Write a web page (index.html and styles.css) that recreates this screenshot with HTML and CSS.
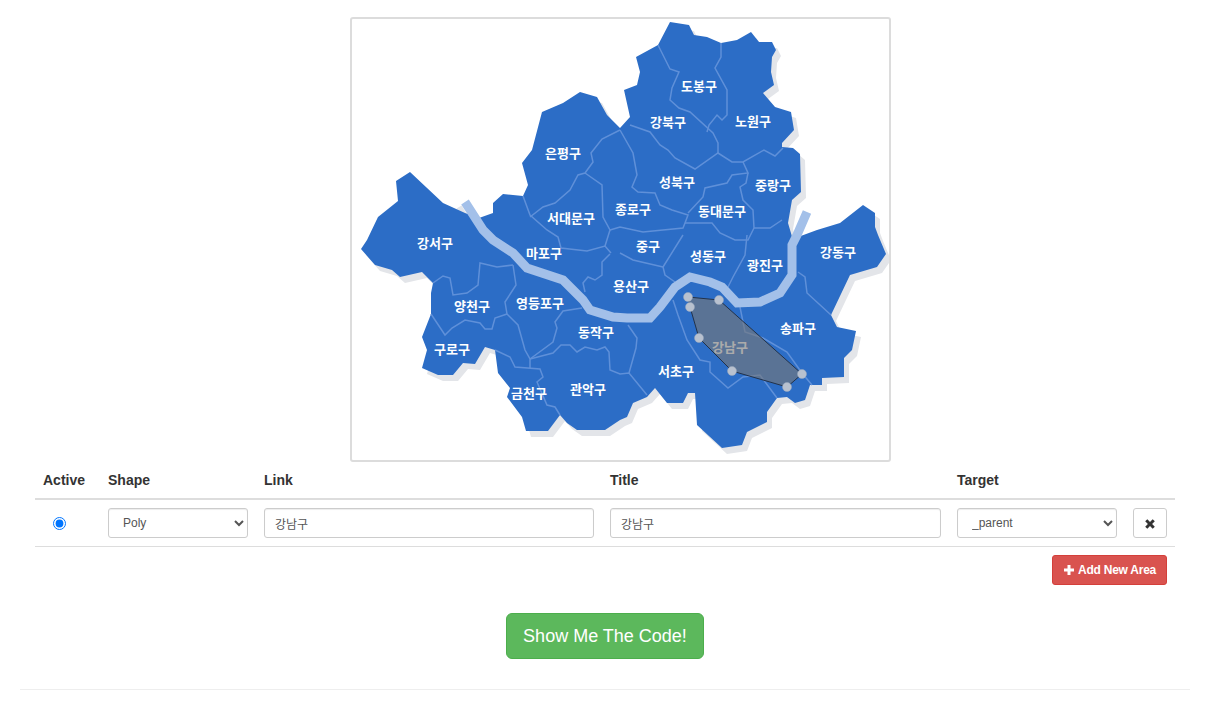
FILE: index.html
```html
<!DOCTYPE html>
<html lang="ko">
<head>
    <meta charset="UTF-8">
    <meta name="viewport" content="width=device-width, initial-scale=1.0">
    <title>Image Map Generator</title>
    <link rel="stylesheet" href="styles.css">
</head>
<body>

<div class="container">
    <!-- Map preview -->
    <div class="map-frame">
        <svg class="map" viewBox="352 19 537 441" width="537" height="441">
            <defs>
                <polygon id="seoul" points="670,22 689,25 694,35 707,37 721,43 737,40 751,32 759,42 772,42 776,50 772,57 771,72 774,85 763,93 775,107 791,112 794,130 782,143 782,147 793,148 800,154 801,192 792,200 788,223 793,240 798,237 817,230 840,223 863,205 875,213 875,227 878,235 886,254 877,267 850,275 831,315 837,327 856,331 852,350 844,358 844,377 822,378 822,385 810,385 805,400 795,403 787,397 777,398 767,412 767,422 747,432 742,445 722,448 697,425 695,393 688,393 683,403 667,403 655,388 647,397 633,403 627,417 620,420 605,430 577,430 567,423 560,415 548,431 526,431 522,417 507,397 510,388 498,373 495,350 485,347 475,364 463,363 453,375 438,375 422,368 427,350 422,337 431,314 431,293 433,283 422,272 400,277 392,270 375,265 361,249 367,240 378,217 398,201 396,181 410,172 443,203 465,213 479,218 493,213 493,203 503,194 523,196 528,185 522,163 532,150 542,112 563,103 580,92 597,97 607,115 620,128 630,117 624,90 637,85 640,72 636,57 658,45"/>
            </defs>

            <use href="#seoul" class="shadow" transform="translate(5 6)"/>
            <path class="river-shadow" d="M459 207 L472 228"/>
            <use href="#seoul" class="land"/>

            <!-- district borders -->
            <g class="borders">
                <polyline points="620,130 602,139 591,153 593,162 585,173 578,175 570,190 555,203 543,207 530,217"/>
                <polyline points="523,196 530,215 547,230 558,237 561,248 587,251 605,246 611,253"/>
                <polyline points="585,173 602,185 603,217 610,230 605,246"/>
                <polyline points="620,130 633,153 637,175 632,187 638,192 655,193 660,205 672,210 688,215 685,223 683,228 663,230 643,232 620,227 610,230"/>
                <polyline points="630,125 650,132 660,145 668,150 675,158 695,169 718,153 732,162 743,162 764,150 775,156 783,148"/>
                <polyline points="658,45 670,69 679,72 672,88 670,100 679,108 690,112 713,133 718,143 718,153"/>
                <polyline points="721,43 721,57 715,68 727,90 727,115 722,120 717,115 709,125 707,132"/>
                <polyline points="743,162 748,173 732,175 727,183 705,188 703,197 688,213"/>
                <polyline points="748,173 746,183 740,187 743,200 753,210 754,228 770,228 782,220"/>
                <polyline points="685,223 712,223 720,233 735,240 748,240 754,228"/>
                <polyline points="747,235 745,255 733,277 728,287"/>
                <polyline points="683,235 663,267 665,275 675,282"/>
                <polyline points="620,253 633,260 663,267"/>
                <polyline points="610,254 602,262 602,275 595,280 588,277 583,283 585,292"/>
                <polyline points="513,265 497,267 480,263 478,285 467,293 453,295 450,278 443,276 433,283"/>
                <polyline points="513,265 516,285 505,302 507,314"/>
                <polyline points="431,314 445,335 452,328 465,320 480,323 485,329 492,329 495,318 507,314"/>
                <polyline points="507,314 518,325 525,350 530,359 530,368"/>
                <polyline points="495,350 510,357 515,367 540,369 543,377 537,382 547,405 555,407 560,415"/>
                <polyline points="530,359 553,342 557,328 555,322 563,311 582,308"/>
                <polyline points="530,359 553,353 561,345 570,345 577,352 585,347 597,350 605,347 609,352 610,370 620,374 629,373 647,395"/>
                <polyline points="629,373 636,348 637,338 628,325"/>
                <polyline points="673,300 678,315 687,340 700,360 710,362 710,372 728,388 743,377 760,375 777,398"/>
                <polyline points="740,307 745,332 763,338 787,352 802,373 812,385"/>
                <polyline points="798,272 805,277 807,293 831,315"/>
            </g>

            <polyline class="river" points="465,202 483,230 493,240 513,253 527,268 563,280 573,290 583,300 590,310 613,317 627,318 650,318 660,307 675,287 690,277 710,282 722,287 737,303 760,302 780,293 792,275 792,245 797,235 807,212"/>

            <g class="labels">
                <text x="699" y="91">도봉구</text>
                <text x="668" y="127">강북구</text>
                <text x="753" y="126">노원구</text>
                <text x="563" y="158">은평구</text>
                <text x="677" y="187">성북구</text>
                <text x="773" y="190">중랑구</text>
                <text x="633" y="214">종로구</text>
                <text x="722" y="216">동대문구</text>
                <text x="571" y="223">서대문구</text>
                <text x="435" y="248">강서구</text>
                <text x="648" y="251">중구</text>
                <text x="708" y="261">성동구</text>
                <text x="544" y="258">마포구</text>
                <text x="765" y="270">광진구</text>
                <text x="838" y="257">강동구</text>
                <text x="631" y="291">용산구</text>
                <text x="472" y="311">양천구</text>
                <text x="540" y="308">영등포구</text>
                <text x="596" y="337">동작구</text>
                <text x="798" y="333">송파구</text>
                <text x="730" y="352">강남구</text>
                <text x="452" y="354">구로구</text>
                <text x="676" y="376">서초구</text>
                <text x="588" y="394">관악구</text>
                <text x="529" y="398">금천구</text>
            </g>

            <!-- selected area -->
            <polygon class="area" points="688,297 719,300 802,374 787,387 732,371 699,338 690,307"/>
            <g class="handles">
                <circle cx="688" cy="297" r="4.5"/>
                <circle cx="719" cy="300" r="4.5"/>
                <circle cx="802" cy="374" r="4.5"/>
                <circle cx="787" cy="387" r="4.5"/>
                <circle cx="732" cy="371" r="4.5"/>
                <circle cx="699" cy="338" r="4.5"/>
                <circle cx="690" cy="307" r="4.5"/>
            </g>
        </svg>
    </div>

    <table class="areas">
        <colgroup>
            <col class="col-active">
            <col class="col-shape">
            <col class="col-link">
            <col class="col-title">
            <col class="col-target">
            <col>
        </colgroup>
        <thead>
            <tr>
                <th>Active</th>
                <th>Shape</th>
                <th>Link</th>
                <th>Title</th>
                <th>Target</th>
                <th></th>
            </tr>
        </thead>
        <tbody>
            <tr>
                <td><input class="radio" type="radio" name="active" checked></td>
                <td>
                    <select class="field">
                        <option>Poly</option>
                        <option>Rect</option>
                        <option>Circle</option>
                    </select>
                </td>
                <td><input class="field" type="text" value="강남구"></td>
                <td><input class="field" type="text" value="강남구"></td>
                <td>
                    <select class="field">
                        <option>_parent</option>
                        <option>_blank</option>
                        <option>_self</option>
                        <option>_top</option>
                    </select>
                </td>
                <td>
                    <button class="btn btn-remove" type="button" aria-label="Remove">
                        <svg class="icon" viewBox="0 0 12 12" width="12" height="12"><path d="M3.3 1.2 6 3.9l2.7-2.7 2.1 2.1L8.1 6l2.7 2.7-2.1 2.1L6 8.1l-2.7 2.7-2.1-2.1L3.9 6 1.2 3.3z"/></svg>
                    </button>
                </td>
            </tr>
        </tbody>
    </table>

    <div class="add-row">
        <button class="btn btn-add" type="button">
            <svg class="icon" viewBox="0 0 12 12" width="12" height="12"><path d="M4.5 1h3v3.5H11v3H7.5V11h-3V7.5H1v-3h3.5z"/></svg>
            Add New Area
        </button>
    </div>

    <div class="show-row">
        <button class="btn btn-show" type="button">Show Me The Code!</button>
    </div>
</div>

<hr class="rule">

</body>
</html>
```

FILE: styles.css
```css
/* Styles for the page */
html, body {
    overflow: hidden;
}
body {
    font-family: "Liberation Sans", "Noto Sans CJK KR", Arial, sans-serif;
    font-size: 14px;
    line-height: 20px;
    margin: 0;
    padding: 0;
    background: #ffffff;
    color: #333;
}
.container {
    width: 1140px;
    margin-left: 35px;
    padding-top: 17px;
}

/* map */
.map-frame {
    width: 537px;
    height: 441px;
    margin-left: 315px;
    border: 2px solid #dcdcdc;
    border-radius: 3px;
}
.map {
    display: block;
}
.shadow {
    fill: #e3e5e9;
}
.land {
    fill: #2c6dc6;
}
.borders polyline {
    fill: none;
    stroke: #5f90d9;
    stroke-width: 1.5;
}
.river {
    fill: none;
    stroke: #a3c0e9;
    stroke-width: 9;
}
.river-shadow {
    fill: none;
    stroke: #e3e5e9;
    stroke-width: 6;
}
.labels text {
    fill: #ffffff;
    font-family: "Noto Sans CJK KR", sans-serif;
    font-size: 13px;
    font-weight: 700;
    text-anchor: middle;
}
.area {
    fill: rgba(120, 120, 120, 0.62);
    stroke: #22324a;
    stroke-width: 1;
}
.handles circle {
    fill: #b8c1cf;
    stroke: #9aa9bf;
    stroke-width: 0.5;
}

/* table */
.areas {
    width: 100%;
    table-layout: fixed;
    border-collapse: collapse;
}
.col-active {
    width: 65px;
}
.col-shape {
    width: 156px;
}
.col-link {
    width: 346px;
}
.col-title {
    width: 347px;
}
.col-target {
    width: 176px;
}
.areas th {
    padding: 8px;
    height: 20px;
    text-align: left;
    font-weight: 700;
    border-bottom: 2px solid #dddddd;
}
.areas td {
    padding: 8px;
    border-bottom: 1px solid #dddddd;
    vertical-align: middle;
}
.radio {
    display: block;
    margin: 0 0 0 10px;
}
.field {
    display: block;
    box-sizing: border-box;
    width: 100%;
    height: 30px;
    padding: 5px 10px;
    font-family: "Liberation Sans", "Noto Sans CJK KR", Arial, sans-serif;
    font-size: 12px;
    line-height: 18px;
    color: #555;
    background: #ffffff;
    border: 1px solid #cccccc;
    border-radius: 3px;
    box-shadow: inset 0 1px 1px rgba(0, 0, 0, 0.075);
}

/* buttons */
.btn {
    box-sizing: border-box;
    font-family: "Liberation Sans", Arial, sans-serif;
    cursor: pointer;
}
.icon {
    fill: currentColor;
    vertical-align: -2px;
}
.btn-remove {
    display: block;
    width: 34px;
    height: 30px;
    padding: 0;
    margin-left: auto;
    color: #333;
    background: #ffffff;
    border: 1px solid #cccccc;
    border-radius: 3px;
}
.add-row {
    display: flex;
    justify-content: flex-end;
    padding: 8px 8px 0 0;
}
.btn-add {
    height: 30px;
    padding: 5px 10px;
    font-size: 12px;
    font-weight: 700;
    letter-spacing: -0.25px;
    line-height: 18px;
    color: #ffffff;
    background: #d9534f;
    border: 1px solid #d43f3a;
    border-radius: 3px;
}
.show-row {
    display: flex;
    justify-content: center;
    padding-top: 28px;
}
.btn-show {
    height: 46px;
    padding: 10px 16px;
    font-size: 18px;
    line-height: 24px;
    color: #ffffff;
    background: #5cb85c;
    border: 1px solid #4cae4c;
    border-radius: 6px;
}
.rule {
    width: 1170px;
    margin: 30px 0 0 20px;
    border: 0;
    border-top: 1px solid #eeeeee;
}
```
